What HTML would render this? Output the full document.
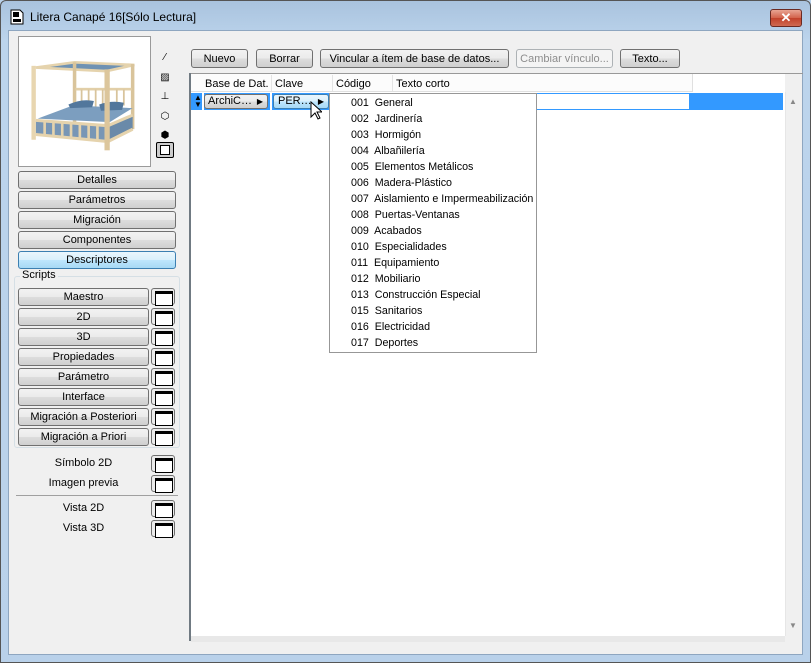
<!DOCTYPE html>
<html><head><meta charset="utf-8"><style>
*{box-sizing:border-box;margin:0;padding:0}
body{width:811px;height:663px;overflow:hidden;font-family:"Liberation Sans",sans-serif;font-size:11px;color:#000;background:#b9d1ea;position:relative}
.a{position:absolute}
.frame{left:0;top:0;width:811px;height:663px;background:linear-gradient(#a9c3de,#bcd4ec 40px,#b9d1ea);border:1px solid #555;border-radius:6px 6px 0 0}
.client{left:8px;top:30px;width:795px;height:625px;background:#f0f0f0;border:1px solid #8ea6c0}
.btn{position:absolute;border:1px solid #707070;border-radius:3px;background:linear-gradient(#f2f2f2 0,#ebebeb 50%,#dddddd 51%,#cfcfcf);text-align:center;line-height:17px;font-size:11px;white-space:nowrap}
.sel{border-color:#3c7fb1;background:linear-gradient(#eaf6fd,#d9f0fc 50%,#bee6fd 51%,#a7d9f5)}
.dis{border-color:#adb2b5;color:#8d8d8d;background:#f4f4f4}
.ib{position:absolute;width:24px;height:17px;border:1px solid #707070;border-radius:3px;background:#ececec}
.ib:after{content:"";position:absolute;left:3px;top:2px;width:16px;height:11px;border:1px solid #000;border-top-width:3px;background:#fff}
.item{position:absolute;left:21px;font-size:10.7px;white-space:nowrap}
</style></head><body>
<div class="a frame"></div>
<svg class="a" style="left:10px;top:9px" width="14" height="16"><path d="M1 1h9l3 3v11H1z" fill="#fff" stroke="#000"/><rect x="3" y="3" width="6" height="5" fill="#000"/><rect x="3" y="10" width="8" height="3" fill="#000"/></svg>
<div class="a" style="left:30px;top:10px;font-size:12px">Litera Canapé 16[Sólo Lectura]</div>
<div class="a" style="left:770px;top:9px;width:32px;height:18px;border:1px solid #6b2a22;border-radius:3px;background:linear-gradient(#e8a493,#d2624a 50%,#c1412a 51%,#cf6a52);color:#fff;font-weight:bold;text-align:center;font-size:13px;line-height:16px">✕</div>
<div class="a client"></div>

<!-- preview -->
<div class="a" style="left:18px;top:36px;width:133px;height:131px;border:1px solid #9a9a9a;background:#fff"></div>
<svg class="a" style="left:24px;top:50px" width="124" height="110" viewBox="0 0 130 125">
<path d="M8 20 L52 14 L120 17 L88 24Z" fill="#6f92b3"/>
<path d="M8 20 L52 14 L120 17 L88 24Z" fill="none" stroke="#e5d3ad" stroke-width="3"/>
<rect x="50" y="14" width="4" height="72" fill="#d9c49b"/>
<rect x="116" y="16" width="4" height="74" fill="#d9c49b"/>
<rect x="53" y="43" width="64" height="3" fill="#e2cfa8"/>
<g stroke="#d8c49c" stroke-width="2"><path d="M60 45v20M68 45v20M76 45v20M84 45v20M100 45v18M108 45v18"/></g>
<path d="M10 78 L50 63 L118 66 L92 82Z" fill="#7c9ebf"/>
<path d="M45 62 Q60 55 74 58 L72 65 L47 66Z" fill="#52779c"/><path d="M80 62 Q94 57 108 60 L106 68 L82 69Z" fill="#52779c"/>
<path d="M8 80 L90 86 L90 104 L8 96Z" fill="#7896b5"/>
<path d="M90 86 L118 74 L118 90 L90 104Z" fill="#6a8aa9"/>
<path d="M8 80 L90 86 L118 74 M8 96 L90 104 L118 90" stroke="#e5d3ad" stroke-width="3.5" fill="none"/>
<g stroke="#e5d3ad" stroke-width="3"><path d="M18 81v16M28 82v16M38 82v17M48 83v17M58 84v17M68 84v17M78 85v18"/></g>
<rect x="3" y="18" width="5" height="84" fill="#e8d6b0"/>
<rect x="86" y="22" width="6" height="92" fill="#dcc69c"/>
</svg>
<div class="a" style="left:160px;top:48px;font-size:10px;line-height:19.5px;text-align:center;width:10px">⁄<br>▨<br>⊥<br>⬡<br>⬢</div>
<div class="a" style="left:156px;top:142px;width:18px;height:16px;border:1px solid #000;border-radius:2px;background:#ccc"><div style="margin:2px 3px;width:10px;height:10px;border:1px solid #000;background:#fff"></div></div>

<div class="btn" style="left:18px;top:171px;width:158px;height:18px">Detalles</div>
<div class="btn" style="left:18px;top:191px;width:158px;height:18px">Parámetros</div>
<div class="btn" style="left:18px;top:211px;width:158px;height:18px">Migración</div>
<div class="btn" style="left:18px;top:231px;width:158px;height:18px">Componentes</div>
<div class="btn sel" style="left:18px;top:251px;width:158px;height:18px">Descriptores</div>

<div class="a" style="left:14px;top:276px;width:166px;height:172px;border:1px solid #d5dfe5;border-radius:3px"></div>
<div class="a" style="left:20px;top:269px;background:#f0f0f0;padding:0 2px">Scripts</div>
<div class="btn" style="left:18px;top:288px;width:131px;height:18px">Maestro</div><div class="ib" style="left:151px;top:288px"></div>
<div class="btn" style="left:18px;top:308px;width:131px;height:18px">2D</div><div class="ib" style="left:151px;top:308px"></div>
<div class="btn" style="left:18px;top:328px;width:131px;height:18px">3D</div><div class="ib" style="left:151px;top:328px"></div>
<div class="btn" style="left:18px;top:348px;width:131px;height:18px">Propiedades</div><div class="ib" style="left:151px;top:348px"></div>
<div class="btn" style="left:18px;top:368px;width:131px;height:18px">Parámetro</div><div class="ib" style="left:151px;top:368px"></div>
<div class="btn" style="left:18px;top:388px;width:131px;height:18px">Interface</div><div class="ib" style="left:151px;top:388px"></div>
<div class="btn" style="left:18px;top:408px;width:131px;height:18px">Migración a Posteriori</div><div class="ib" style="left:151px;top:408px"></div>
<div class="btn" style="left:18px;top:428px;width:131px;height:18px">Migración a Priori</div><div class="ib" style="left:151px;top:428px"></div>
<div class="a" style="left:18px;top:457px;width:131px;text-align:center">Símbolo 2D</div><div class="ib" style="left:151px;top:455px"></div>
<div class="a" style="left:18px;top:477px;width:131px;text-align:center">Imagen previa</div><div class="ib" style="left:151px;top:475px"></div>
<div class="a" style="left:16px;top:495px;width:162px;height:1px;background:#a0a0a0"></div>
<div class="a" style="left:18px;top:502px;width:131px;text-align:center">Vista 2D</div><div class="ib" style="left:151px;top:500px"></div>
<div class="a" style="left:18px;top:522px;width:131px;text-align:center">Vista 3D</div><div class="ib" style="left:151px;top:520px"></div>

<!-- top buttons -->
<div class="btn" style="left:191px;top:49px;width:57px;height:19px;line-height:18px">Nuevo</div>
<div class="btn" style="left:256px;top:49px;width:57px;height:19px;line-height:18px">Borrar</div>
<div class="btn" style="left:320px;top:49px;width:189px;height:19px;line-height:18px">Vincular a ítem de base de datos...</div>
<div class="btn dis" style="left:516px;top:49px;width:97px;height:19px;line-height:18px">Cambiar vínculo...</div>
<div class="btn" style="left:620px;top:49px;width:60px;height:19px;line-height:18px">Texto...</div>

<!-- table -->
<div class="a" style="left:189px;top:73px;width:614px;height:1px;background:#999"></div>
<div class="a" style="left:189px;top:73px;width:2px;height:568px;background:#707a82"></div>
<div class="a" style="left:191px;top:74px;width:594px;height:562px;background:#fff"></div>
<div class="a" style="left:191px;top:74px;width:502px;height:18px;border-bottom:1px solid #e0e0e0;border-right:1px solid #e0e0e0;background:#fcfcfc"></div>
<div class="a" style="left:271px;top:75px;width:1px;height:16px;background:#e4e4e4"></div>
<div class="a" style="left:332px;top:75px;width:1px;height:16px;background:#e4e4e4"></div>
<div class="a" style="left:392px;top:75px;width:1px;height:16px;background:#e4e4e4"></div>
<div class="a" style="left:205px;top:78px">Base de Dat.</div>
<div class="a" style="left:275px;top:78px">Clave</div>
<div class="a" style="left:336px;top:78px">Código</div>
<div class="a" style="left:396px;top:78px">Texto corto</div>
<div class="a" style="left:191px;top:93px;width:592px;height:17px;background:#3399ff"></div>
<div class="a" style="left:194px;top:94px;color:#000;font-size:8px;line-height:7px">▲<br>▼</div>
<div class="a" style="left:202px;top:93px;width:2px;height:17px;background:#fff"></div>
<div class="btn" style="left:204px;top:94px;width:64px;height:15px;line-height:13px;text-align:left;padding-left:3px">ArchiC… <span style="position:absolute;right:4px;font-size:8px">▶</span></div>
<div class="a" style="left:270px;top:93px;width:2px;height:17px;background:#fff"></div>
<div class="btn sel" style="left:273px;top:94px;width:56px;height:15px;line-height:13px;text-align:left;padding-left:4px">PER… <span style="position:absolute;right:4px;font-size:8px">▶</span></div>
<div class="a" style="left:536px;top:94px;width:153px;height:15px;background:#fff"></div>
<svg class="a" style="left:310px;top:101px" width="12" height="20"><path d="M1 1v15l4-4 3 6 2-1-3-6h5z" fill="#fff" stroke="#000"/></svg>

<!-- dropdown -->
<div class="a" style="left:329px;top:93px;width:208px;height:260px;background:#fff;border:1px solid #979797">
<div class="item" style="top:3px">001&nbsp; General</div>
<div class="item" style="top:19px">002&nbsp; Jardinería</div>
<div class="item" style="top:35px">003&nbsp; Hormigón</div>
<div class="item" style="top:51px">004&nbsp; Albañilería</div>
<div class="item" style="top:67px">005&nbsp; Elementos Metálicos</div>
<div class="item" style="top:83px">006&nbsp; Madera-Plástico</div>
<div class="item" style="top:99px">007&nbsp; Aislamiento e Impermeabilización</div>
<div class="item" style="top:115px">008&nbsp; Puertas-Ventanas</div>
<div class="item" style="top:131px">009&nbsp; Acabados</div>
<div class="item" style="top:147px">010&nbsp; Especialidades</div>
<div class="item" style="top:163px">011&nbsp; Equipamiento</div>
<div class="item" style="top:179px">012&nbsp; Mobiliario</div>
<div class="item" style="top:195px">013&nbsp; Construcción Especial</div>
<div class="item" style="top:211px">015&nbsp; Sanitarios</div>
<div class="item" style="top:227px">016&nbsp; Electricidad</div>
<div class="item" style="top:243px">017&nbsp; Deportes</div>
</div>

<!-- scrollbar -->
<div class="a" style="left:785px;top:92px;width:16px;height:544px;background:#f0f0f0;border-left:1px solid #e6e6e6"></div>
<div class="a" style="left:789px;top:97px;color:#888;font-size:8px">▲</div>
<div class="a" style="left:789px;top:621px;color:#888;font-size:8px">▼</div>
<div class="a" style="left:191px;top:636px;width:594px;height:6px;background:#e8e8e8"></div>
</body></html>
